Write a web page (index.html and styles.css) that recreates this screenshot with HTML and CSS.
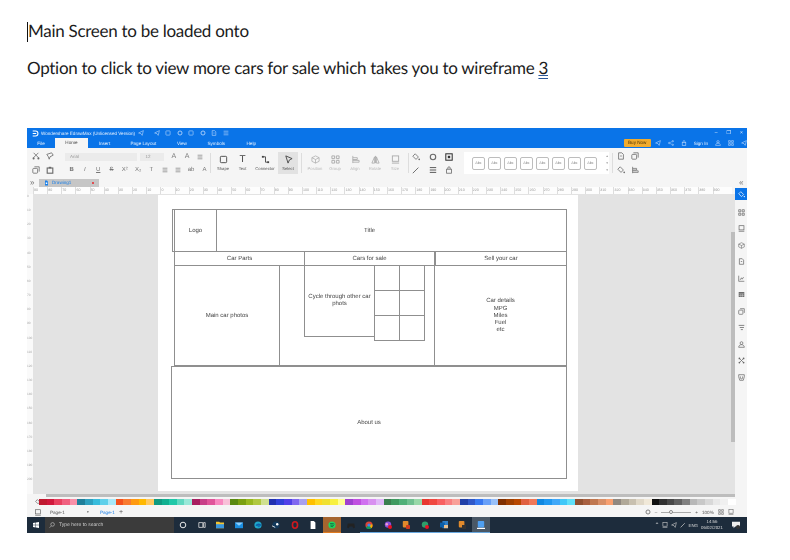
FILE: index.html
```html
<!DOCTYPE html>
<html lang="en">
<head>
    <meta charset="UTF-8">
    <meta name="viewport" content="width=device-width, initial-scale=1.0">
    <title>Main Screen</title>
    <link rel="stylesheet" href="styles.css">
</head>
<body>
    <svg class="defs" width="0" height="0">
        <symbol id="i-box" viewBox="0 0 10 10"><rect x="1.5" y="1.5" width="7" height="7" rx="1" fill="none" stroke="currentColor"/></symbol>
        <symbol id="i-doc" viewBox="0 0 10 10"><path d="M2 1h4l2 2v6H2z M4 5h2" fill="none" stroke="currentColor"/></symbol>
        <symbol id="i-cut" viewBox="0 0 10 10"><path d="M2 1l6 6M8 1L2 7" fill="none" stroke="currentColor"/><circle cx="2" cy="8" r="1.3" fill="currentColor"/><circle cx="8" cy="8" r="1.3" fill="currentColor"/></symbol>
        <symbol id="i-brush" viewBox="0 0 10 10"><path d="M1 3l6-2 2 3-4 2-1 3-1-3z" fill="none" stroke="currentColor"/></symbol>
        <symbol id="i-paste" viewBox="0 0 10 10"><rect x="1.5" y="2.5" width="7" height="6.5" fill="none" stroke="currentColor" stroke-width="1.4"/><rect x="3.5" y="1" width="3" height="2" fill="currentColor"/></symbol>
        <symbol id="i-copy" viewBox="0 0 10 10"><rect x="1" y="3" width="6" height="6" rx="1" fill="none" stroke="currentColor"/><path d="M3 1h6v6" fill="none" stroke="currentColor"/></symbol>
        <symbol id="i-lines" viewBox="0 0 10 10"><path d="M1 2h8M1 5h8M1 8h8" fill="none" stroke="currentColor"/></symbol>
        <symbol id="i-grid" viewBox="0 0 10 10"><path d="M1 1h3v3H1zM6 1h3v3H6zM1 6h3v3H1zM6 6h3v3H6z" fill="none" stroke="currentColor"/></symbol>
        <symbol id="i-hex" viewBox="0 0 10 10"><path d="M5 1l4 2v4L5 9 1 7V3z M1 3l4 2 4-2M5 5v4" fill="none" stroke="currentColor" stroke-width=".8"/></symbol>
        <symbol id="i-align" viewBox="0 0 10 10"><path d="M2 1v8M2 3h5v2H2M2 6h7v2H2" fill="none" stroke="currentColor" stroke-width=".9"/></symbol>
        <symbol id="i-flip" viewBox="0 0 10 10"><path d="M5 1v8M4 2L1 9h3zM6 2l3 7H6z" fill="none" stroke="currentColor" stroke-width=".9"/></symbol>
        <symbol id="i-size" viewBox="0 0 10 10"><rect x="1.5" y="1" width="7" height="6" fill="none" stroke="currentColor"/><path d="M1 9h8" stroke="currentColor"/></symbol>
        <symbol id="i-fill" viewBox="0 0 10 10"><path d="M4 1l4 4-3 3-4-4z" fill="none" stroke="currentColor"/><circle cx="9" cy="8" r="1" fill="currentColor"/></symbol>
        <symbol id="i-ring" viewBox="0 0 10 10"><circle cx="5" cy="5" r="3.4" fill="none" stroke="currentColor" stroke-width="1.4"/></symbol>
        <symbol id="i-shadow" viewBox="0 0 10 10"><rect x="1" y="1" width="8" height="8" fill="none" stroke="currentColor" stroke-width="1.3"/><rect x="3.5" y="3.5" width="3" height="3" fill="currentColor"/></symbol>
        <symbol id="i-pen" viewBox="0 0 10 10"><path d="M1 9l7-7" fill="none" stroke="currentColor" stroke-width="1.2"/></symbol>
        <symbol id="i-lock" viewBox="0 0 10 10"><rect x="2" y="4" width="6" height="5" fill="none" stroke="currentColor"/><path d="M3.5 4V2.500a1.500 1.500 0 013 0V4" fill="none" stroke="currentColor"/></symbol>
        <symbol id="i-select" viewBox="0 0 10 10"><path d="M2 1l7 3-3 1.500L4.500 9z" fill="none" stroke="currentColor"/></symbol>
        <symbol id="i-conn" viewBox="0 0 10 10"><path d="M2 2h3v6h3" fill="none" stroke="currentColor"/><rect x="1" y="1" width="2" height="2" fill="currentColor"/><rect x="7" y="7" width="2" height="2" fill="currentColor"/></symbol>
        <symbol id="i-share" viewBox="0 0 10 10"><circle cx="2" cy="5" r="1.2" fill="none" stroke="currentColor"/><circle cx="8" cy="2" r="1.200" fill="none" stroke="currentColor"/><circle cx="8" cy="8" r="1.200" fill="none" stroke="currentColor"/><path d="M3 4.500l4-2M3 5.500l4 2" stroke="currentColor" stroke-width=".7"/></symbol>
        <symbol id="i-send" viewBox="0 0 10 10"><path d="M1 5l8-4-2 8-2-3z" fill="none" stroke="currentColor"/></symbol>
        <symbol id="i-chart" viewBox="0 0 10 10"><path d="M1 1v8h8M3 7l2-3 1 2 2-3" fill="none" stroke="currentColor"/></symbol>
        <symbol id="i-table" viewBox="0 0 10 10"><rect x="1" y="1.500" width="8" height="7" fill="currentColor"/><path d="M1 4h8M1 6.300h8M4 4v4.500M6.500 4v4.500" stroke="#f5f5f5" stroke-width=".5"/></symbol>
        <symbol id="i-filter" viewBox="0 0 10 10"><path d="M1 2h8M2.500 5h6M4 8h3" stroke="currentColor" stroke-width="1.100"/></symbol>
        <symbol id="i-user" viewBox="0 0 10 10"><circle cx="5" cy="3" r="2" fill="none" stroke="currentColor"/><path d="M1 9c0-5 8-5 8 0z" fill="none" stroke="currentColor"/></symbol>
        <symbol id="i-cross" viewBox="0 0 10 10"><path d="M2 2l6 6M8 2L2 8" stroke="currentColor"/><circle cx="2" cy="2" r="1.200" fill="currentColor"/><circle cx="8" cy="2" r="1.200" fill="currentColor"/><circle cx="2" cy="8" r="1.200" fill="currentColor"/><circle cx="8" cy="8" r="1.200" fill="currentColor"/></symbol>
        <symbol id="i-basket" viewBox="0 0 10 10"><path d="M1 1h8v3L7.500 9h-5L1 4zM3.500 3.500v2a1.500 1.500 0 003 0v-2" fill="none" stroke="currentColor"/></symbol>
    </svg>

    <p class="line first"><span class="caret"></span>Main Screen to be loaded onto</p>
    <p class="line">Option to click to view more cars for sale which takes you to wireframe <span class="link">3</span></p>

    <div class="app">
        <div class="titlebar">
            <div class="title-top">
                <svg class="logo" viewBox="0 0 10 10"><path d="M1 1.500h4a3.500 3.500 0 010 7H1M1 5h5" fill="none" stroke="#fff" stroke-width="1.500"/></svg>
                <span class="app-name">Wondershare EdrawMax (Unlicensed Version)</span>
                <span class="quick">
                    <svg><use href="#i-send"/></svg><svg><use href="#i-send"/></svg><svg><use href="#i-box"/></svg><svg><use href="#i-ring"/></svg><svg><use href="#i-box"/></svg><svg><use href="#i-ring"/></svg><svg><use href="#i-doc"/></svg><svg><use href="#i-lines"/></svg>
                </span>
                <span class="winctl"><i>&#8211;</i><i>&#10064;</i><i>&#215;</i></span>
            </div>
            <div class="title-tabs">
                <span class="tab t-file">File</span>
                <span class="tab t-home">Home</span>
                <span class="tab t-insert">Insert</span>
                <span class="tab t-layout">Page Layout</span>
                <span class="tab t-view">View</span>
                <span class="tab t-symbols">Symbols</span>
                <span class="tab t-help">Help</span>
                <span class="buy">Buy Now</span>
                <span class="account">
                    <svg><use href="#i-send"/></svg><svg><use href="#i-share"/></svg><svg><use href="#i-lock"/></svg><b>Sign In</b><svg><use href="#i-user"/></svg><svg><use href="#i-grid"/></svg><svg><use href="#i-send"/></svg>
                </span>
            </div>
        </div>

        <div class="ribbon">
            <div class="rb-clip">
                <svg><use href="#i-cut"/></svg><svg><use href="#i-brush"/></svg>
                <svg><use href="#i-copy"/></svg><svg><use href="#i-paste"/></svg>
            </div>
            <div class="rb-font">
                <div class="font-row">
                    <span class="select font-name">Arial</span>
                    <span class="select font-size">12</span>
                    <span class="fmt big">A</span><span class="fmt big">A</span><svg class="fmt-ico"><use href="#i-lines"/></svg>
                </div>
                <div class="font-row">
                    <span class="fmt"><b>B</b></span><span class="fmt"><em>I</em></span><span class="fmt"><u>U</u></span><span class="fmt"><s>S</s></span><span class="fmt">X²</span><span class="fmt">X₂</span><span class="fmt">T</span><svg class="fmt-ico"><use href="#i-lines"/></svg><svg class="fmt-ico"><use href="#i-lines"/></svg><span class="fmt">ab</span><span class="fmt">A</span>
                </div>
            </div>
            <div class="rb-sep"></div>
            <div class="tool w-shape"><svg><use href="#i-box"/></svg><span>Shape</span></div>
            <div class="tool w-text"><strong class="big-t">T</strong><span>Text</span></div>
            <div class="tool w-conn"><svg><use href="#i-conn"/></svg><span>Connector</span></div>
            <div class="tool w-select active"><svg><use href="#i-select"/></svg><span>Select</span></div>
            <div class="rb-sep"></div>
            <div class="tool off"><svg><use href="#i-hex"/></svg><span>Position</span></div>
            <div class="tool off"><svg><use href="#i-grid"/></svg><span>Group</span></div>
            <div class="tool off"><svg><use href="#i-align"/></svg><span>Align</span></div>
            <div class="tool off"><svg><use href="#i-flip"/></svg><span>Rotate</span></div>
            <div class="tool off"><svg><use href="#i-size"/></svg><span>Size</span></div>
            <div class="rb-sep"></div>
            <div class="rb-style">
                <svg><use href="#i-fill"/></svg><svg><use href="#i-ring"/></svg><svg class="dark"><use href="#i-shadow"/></svg>
                <svg><use href="#i-pen"/></svg><svg class="dark"><use href="#i-lines"/></svg><svg><use href="#i-lock"/></svg>
            </div>
            <div class="abc-box">
                <span class="abc">Abc</span><span class="abc">Abc</span><span class="abc">Abc</span><span class="abc">Abc</span><span class="abc">Abc</span><span class="abc">Abc</span><span class="abc">Abc</span><span class="abc">Abc</span>
                <span class="abc-more">&#9652;<br>&#9662;<br>&#9662;</span>
            </div>
            <div class="rb-sep"></div>
            <div class="rb-last">
                <svg><use href="#i-doc"/></svg><svg><use href="#i-copy"/></svg>
                <svg><use href="#i-fill"/></svg><svg><use href="#i-align"/></svg>
            </div>
        </div>

        <div class="docbar">
            <span class="chev">&#187;</span>
            <div class="doctab">
                <svg class="doc-ico" viewBox="0 0 10 10"><path d="M2 0h4l2 2v8H2z" fill="#1a7fe8"/><rect x="3.500" y="4" width="3" height="3" fill="#fff"/></svg>
                <span class="doc-name">Drawing1</span>
                <span class="doc-dot"></span>
            </div>
            <span class="chev end">&#171;</span>
        </div>
        <div class="ruler-row">
            <div class="ruler" id="ruler"></div>
        </div>

        <div class="work">
            <div class="vruler" id="vruler"></div>
            <div class="canvas">
                <div class="page">
                    <div class="shape header">Title</div>
                    <div class="shape logo-box">Logo</div>
                    <div class="shape nav n1">Car Parts</div>
                    <div class="shape nav n2">Cars for sale</div>
                    <div class="shape nav n3">Sell your car</div>
                    <div class="shape col main-photo">Main car photos</div>
                    <div class="shape col mid"></div>
                    <div class="shape col details">Car details<br>MPG<br>Miles<br>Fuel<br>etc</div>
                    <div class="shape cycle">Cycle through other car<br>phots</div>
                    <div class="thumbs"><i></i><i></i><i></i><i></i><i></i><i></i></div>
                    <div class="shape about">About us</div>
                </div>
                <div class="vscroll"></div>
            </div>
            <div class="sidepanel">
                <div class="side-on"><svg><use href="#i-fill"/></svg></div>
                <svg><use href="#i-grid"/></svg>
                <svg><use href="#i-size"/></svg>
                <svg><use href="#i-hex"/></svg>
                <svg><use href="#i-doc"/></svg>
                <svg><use href="#i-chart"/></svg>
                <svg><use href="#i-table"/></svg>
                <svg><use href="#i-copy"/></svg>
                <svg><use href="#i-filter"/></svg>
                <svg><use href="#i-user"/></svg>
                <svg><use href="#i-cross"/></svg>
                <svg><use href="#i-basket"/></svg>
            </div>
        </div>
        <div class="hscroll"></div>

        <div class="palette">
            <svg class="pal-ico"><use href="#i-fill"/></svg>
            <div class="swatches" id="swatches"></div>
        </div>

        <div class="pagebar">
            <svg class="pb-ico"><use href="#i-size"/></svg>
            <span class="pb-name">Page-1</span>
            <span class="pb-caret">&#9662;</span>
            <span class="pb-active">Page-1</span>
            <span class="pb-plus">+</span>
            <span class="zoom">
                <svg><use href="#i-ring"/></svg>
                <span>&#8211;</span><span class="slider"><i></i></span><span>+</span>
                <span class="zoom-val">100%</span>
                <svg><use href="#i-grid"/></svg><svg><use href="#i-size"/></svg>
            </span>
        </div>

        <div class="taskbar">
            <svg class="start" viewBox="0 0 10 10"><path d="M0 1.500l4.300-.6v3.800H0zM5 .8L10 0v4.700H5zM0 5.300h4.300v3.800L0 8.500zM5 5.300h5V10l-5-.8z" fill="#fff"/></svg>
            <div class="search">
                <svg viewBox="0 0 10 10"><circle cx="6" cy="4" r="3" fill="none" stroke="#ccc"/><path d="M4 6.500L1 9.500" stroke="#ccc"/></svg>
                <span>Type here to search</span>
            </div>
            <div class="tray-apps">
                <span class="app-i"><svg viewBox="0 0 10 10"><circle cx="5" cy="5" r="3.500" fill="none" stroke="#eee" stroke-width="1.200"/></svg></span>
                <span class="app-i"><svg viewBox="0 0 10 10"><path d="M1 2h5v6H1zM7 2h2v6H7z" fill="none" stroke="#ddd"/></svg></span>
                <span class="app-i"><svg viewBox="0 0 10 10"><path d="M0 1h4l1 1h5v7H0z" fill="#f4c430"/><rect y="4" width="10" height="5" fill="#3a96dd"/></svg></span>
                <span class="app-i"><svg viewBox="0 0 10 10"><rect y="2" width="10" height="7" fill="#1b8ee0"/><path d="M0 2l5 4 5-4" fill="#8cd0ff"/></svg></span>
                <span class="app-i"><svg viewBox="0 0 10 10"><circle cx="5" cy="5" r="4.500" fill="#1fa6c9"/><path d="M2 6c1-4 7-4 7 0H4c0 2 3 2 4 1" fill="#0b5ea8"/></svg></span>
                <span class="app-i"><svg viewBox="0 0 10 10"><circle cx="5" cy="5" r="4.500" fill="#12395b"/><circle cx="6.500" cy="4" r="1.500" fill="#fff"/><path d="M0 6l4 2" stroke="#fff"/></svg></span>
                <span class="app-i"><svg viewBox="0 0 10 10"><ellipse cx="5" cy="5" rx="3.200" ry="4" fill="none" stroke="#d0191f" stroke-width="2"/></svg></span>
                <span class="app-i"><svg viewBox="0 0 10 10"><path d="M2 0h4l2 2v8H2z" fill="#fff"/></svg></span>
                <span class="app-i playing"><svg viewBox="0 0 10 10"><circle cx="5" cy="5" r="4.500" fill="#1ed760"/><path d="M2.500 3.500c2-.6 4-.4 5.500.5M3 5.300c1.500-.4 3-.3 4.300.4M3.300 7c1-.3 2.200-.2 3.200.3" stroke="#123" stroke-width=".7" fill="none"/></svg></span>
                <span class="app-i"><svg viewBox="0 0 10 10"><path d="M1 3h8l1 5-2 1-1-2H3L2 9 0 8z" fill="#222"/></svg></span>
                <span class="app-i open"><svg viewBox="0 0 10 10"><circle cx="5" cy="5" r="4.500" fill="#db4437"/><path d="M5 5L1 8a4.500 4.500 0 007 1z" fill="#0f9d58"/><path d="M5 5l4-1a4.500 4.500 0 01-1 5z" fill="#f4b400"/><circle cx="5" cy="5" r="2" fill="#4285f4"/></svg></span>
                <span class="app-i open"><svg viewBox="0 0 10 10"><circle cx="5" cy="4.500" r="4" fill="#8a4fd8"/><circle cx="3.500" cy="4" r="1.500" fill="#f0a0d0"/><circle cx="7.500" cy="7.500" r="2.500" fill="#e81123"/></svg></span>
                <span class="app-i open"><svg viewBox="0 0 10 10"><rect x="1" y="0" width="7" height="8" rx="1" fill="#e08a2c"/><rect x="5" y="5" width="5" height="5" rx="1" fill="#d0391f"/></svg></span>
                <span class="app-i open"><svg viewBox="0 0 10 10"><circle cx="5" cy="4.500" r="4" fill="#2e9e6a"/><circle cx="7.500" cy="7.500" r="2.500" fill="#e81123"/></svg></span>
                <span class="app-i open"><svg viewBox="0 0 10 10"><rect x="3" y="0" width="7" height="9" fill="#2e7fc9"/><rect x="0" y="2" width="6" height="6" fill="#0b5ea8"/><rect x="5" y="5" width="5" height="4" fill="#e8c090"/></svg></span>
                <span class="app-i open"><svg viewBox="0 0 10 10"><rect x="1" y="0" width="7" height="8" rx="1" fill="#e08a2c"/><rect x="5" y="5" width="5" height="5" fill="#333"/></svg></span>
                <span class="app-i open current"><svg viewBox="0 0 10 10"><rect x="1" y="0" width="8" height="8" rx="1" fill="#4f9ff0"/><path d="M0 8.500h10v1.500H0z" fill="#fff"/></svg></span>
            </div>
            <div class="tray">
                <span class="tray-i">&#8963;</span>
                <svg><use href="#i-size"/></svg><svg><use href="#i-send"/></svg><svg><use href="#i-pen"/></svg>
                <span class="lang">ENG</span>
                <span class="clock">14:56<br>06/02/2021</span>
                <svg class="notify" viewBox="0 0 10 10"><path d="M0 1h10v6H4L2 9V7H0z" fill="#eee"/><circle cx="7.500" cy="7.500" r="2.500" fill="#333"/></svg>
            </div>
        </div>
    </div>

    <script>
        var colours = [
            "#c01a30","#d0183c","#e8405f","#f0607f","#f890a8",
            "#1f7f9a","#2ea0bf","#38bcdc","#60d0ea","#a8e8f8",
            "#f4511e","#f97a30","#ff9a10","#ffb800","#ffc860",
            "#0f9a80","#10b090","#20c8a8","#60d8c0","#98e8d8",
            "#a81f60","#c83f88","#e0559a","#f888c0","#f8c0d8",
            "#5a8a10","#7aa010","#98b820","#b0c840","#d0e090",
            "#2030b0","#3040d8","#5040e8","#8068f0","#a8a0f0",
            "#ffc000","#ffd820","#f0e030","#f8f040","#ffff90",
            "#a040d0","#c050e0","#d070f0","#d890f0","#e0b8f8",
            "#3a8050","#3f9a60","#50b078","#70c090","#98d8a8",
            "#e83830","#f04840","#f86060","#f88080","#f8a098",
            "#2040a8","#3058c8","#3878f0","#68a0f8","#98c0f8",
            "#803000","#a04000","#b84800","#e06040","#f07858",
            "#1088e0","#2098f0","#40a8f8","#40c8f8","#60e0f8",
            "#905030","#a86040","#c07850","#d89068","#f8a070",
            "#908880","#b0a898","#c8c0b0","#e0d8c8","#f0e8d8",
            "#101010","#303030","#484848","#606060","#808080",
            "#b8b8b8","#c8c8c8","#d8d8d8","#e8e8e8","#f0f0f0","#ffffff"
        ];
        document.getElementById("swatches").innerHTML = colours.map(function(c){
            return `<i style="background:${c}"></i>`;
        }).join("");

        var marks = "";
        for (var n = -90; n <= 390; n += 10) {
            marks += `<span>${Math.abs(n)}</span>`;
        }
        document.getElementById("ruler").innerHTML = marks;

        var side = "";
        for (var m = 0; m < 21; m++) {
            side += `<span>${m * 10}</span>`;
        }
        document.getElementById("vruler").innerHTML = side;
    </script>
</body>
</html>
```

FILE: styles.css
```css
*{
    box-sizing: border-box;
}
body{
    margin: 0;
    height: 560px;
    overflow: hidden;
    background: #fff;
    font-family: "Liberation Sans", Arial, sans-serif;
    text-rendering: geometricPrecision;
}
.defs{
    display: block;
    height: 0;
}
svg{
    width: 7px;
    height: 7px;
    flex: none;
    color: #6a6a6a;
}

/* the word document text */
.line{
    margin: 0;
    padding-left: 27px;
    height: 24px;
    line-height: 24px;
    font-family: Lato, "Open Sans", sans-serif;
    font-size: 17px;
    letter-spacing: -0.28px;
    color: #1c1c1c;
}
.first{
    margin-top: 19px;
    margin-bottom: 13px;
}
.caret{
    display: inline-block;
    width: 1px;
    height: 20px;
    background: #111;
    vertical-align: -5px;
}
.link{
    text-decoration: underline double #2b579a;
}

/* app window */
.app{
    width: 720px;
    height: 405px;
    margin: 48px 0 0 27px;
    display: flex;
    flex-direction: column;
    background: #f5f5f5;
    filter: blur(.3px);
}
.titlebar{
    height: 20px;
    background: #0a74e8;
    color: #e8f2ff;
    font-size: 4.6px;
}
.title-top{
    height: 10px;
    display: flex;
    align-items: center;
    padding-left: 5px;
}
.logo{
    width: 7px;
    height: 7px;
}
.app-name{
    margin-left: 2px;
    width: 97px;
    white-space: nowrap;
}
.quick{
    display: flex;
    gap: 5.5px;
}
.quick svg:first-child{
    margin-right: 4px;
}
.quick svg,
.account svg{
    color: #bcd8fb;
    width: 6px;
    height: 6px;
}
.winctl{
    margin-left: auto;
    display: flex;
    gap: 9px;
    padding-right: 4px;
    font-size: 5px;
}
.winctl i{
    font-style: normal;
}
.title-tabs{
    height: 10px;
    display: flex;
    align-items: center;
}
.tab{
    text-align: center;
    white-space: nowrap;
}
.t-file{ width: 28px; }
.t-home{
    width: 33px;
    height: 10px;
    line-height: 10px;
    background: #f5f5f5;
    color: #444;
}
.t-insert{ width: 33px; }
.t-layout{ width: 45px; }
.t-view{ width: 32px; }
.t-symbols{ width: 37px; }
.t-help{ width: 33px; }
.buy{
    margin-left: 356px;
    width: 27px;
    height: 8px;
    line-height: 8px;
    text-align: center;
    background: #f0ab2e;
    color: #4a3000;
    border-radius: 1px;
}
.account{
    margin-left: 4px;
    display: flex;
    align-items: center;
    gap: 7px;
    white-space: nowrap;
}
.account b{
    font-weight: normal;
}

/* ribbon */
.ribbon{
    height: 30px;
    display: flex;
    align-items: center;
    padding-left: 5px;
    background: #f5f5f5;
}
.rb-clip{
    width: 31px;
    display: grid;
    grid-template-columns: 14px 14px;
    row-gap: 6px;
}
.rb-clip svg{
    width: 8px;
    height: 8px;
}
.rb-font{
    width: 142px;
    display: flex;
    flex-direction: column;
    gap: 4px;
    margin-left: 2px;
}
.font-row{
    height: 9px;
    display: flex;
    align-items: center;
    color: #777;
    font-size: 6px;
}
.select{
    height: 8px;
    line-height: 8px;
    background: #ebebeb;
    font-size: 4.5px;
    color: #999;
    padding-left: 5px;
}
.font-name{ width: 73px; margin-right: 3px; }
.font-size{ width: 24px; margin-right: 3px; }
.fmt{
    width: 13.3px;
    text-align: center;
    flex: none;
}
.big{
    font-size: 7px;
}
.fmt-ico{
    width: 6px;
    height: 6px;
    margin: 0 3.6px;
}
.rb-sep{
    width: 1px;
    height: 20px;
    background: #ddd;
    margin: 0 3px;
    flex: none;
}
.tool{
    width: 20px;
    height: 22px;
    display: flex;
    flex-direction: column;
    align-items: center;
    justify-content: center;
    gap: 2px;
    font-size: 4.2px;
    color: #555;
    white-space: nowrap;
    flex: none;
}
.tool svg{
    width: 9px;
    height: 9px;
    color: #444;
}
.w-shape{ width: 20px; margin-left: -1px; }
.w-text{ width: 19px; }
.w-conn{ width: 26px; }
.active{
    background: #e2e2e2;
}
.big-t{
    font-size: 10px;
    line-height: 9px;
    color: #444;
    font-weight: normal;
}
.off{
    color: #bbb;
}
.off svg{
    color: #aaa;
}
.rb-style{
    width: 52px;
    display: grid;
    grid-template-columns: repeat(3, 16.5px);
    row-gap: 5px;
}
.rb-style svg{
    width: 8px;
    height: 8px;
}
.rb-style .dark{
    color: #333;
}
.abc-box{
    width: 145px;
    height: 22px;
    display: flex;
    align-items: center;
    gap: 3px;
    padding-left: 8px;
    background: #fff;
    flex: none;
}
.abc{
    width: 13px;
    height: 13px;
    border: 1px solid #bdbdbd;
    border-radius: 2px;
    font-size: 3.8px;
    line-height: 11px;
    text-align: center;
    color: #888;
    flex: none;
}
.abc-more{
    margin-left: auto;
    margin-right: 1px;
    font-size: 3.5px;
    line-height: 7px;
    color: #999;
}
.rb-last{
    display: grid;
    grid-template-columns: 14px 14px;
    row-gap: 6px;
    padding-left: 1px;
}
.rb-last svg{
    width: 8px;
    height: 8px;
}

/* document tab + rulers */
.docbar{
    height: 9px;
    display: flex;
    align-items: center;
    padding-left: 3px;
    background: #f5f5f5;
}
.chev{
    width: 9px;
    color: #777;
    font-size: 8px;
    line-height: 9px;
}
.chev.end{
    margin-left: auto;
    width: 8px;
}
.doctab{
    width: 60px;
    height: 8px;
    display: flex;
    align-items: center;
    padding-left: 5px;
    background: #c6c6c6;
    font-size: 4.6px;
}
.doc-ico{
    width: 5px;
    height: 6px;
}
.doc-name{
    margin-left: 3px;
    color: #1a7fe8;
}
.doc-dot{
    width: 2px;
    height: 2px;
    margin-left: auto;
    margin-right: 5px;
    border-radius: 50%;
    background: #e8262c;
}
.ruler-row{
    height: 7px;
    padding: 0 15px 0 6px;
    background: #f5f5f5;
}
.ruler{
    height: 7px;
    display: flex;
    overflow: hidden;
    background: #fdfdfd;
}
.ruler span{
    width: 14.17px;
    flex: none;
    font-size: 3.6px;
    line-height: 6px;
    color: #999;
    border-left: 1px solid #ddd;
}

/* work area */
.work{
    height: 300px;
    display: flex;
}
.vruler{
    width: 6px;
    flex: none;
    overflow: hidden;
    background: #fafafa;
}
.vruler span{
    display: block;
    height: 14.17px;
    font-size: 3.2px;
    color: #aaa;
    overflow: hidden;
}
.canvas{
    width: 702px;
    flex: none;
    position: relative;
    padding: 1px 0 0 125px;
    background: #e3e3e3;
    overflow: hidden;
}
.vscroll{
    position: absolute;
    right: 0;
    top: 38px;
    width: 4px;
    height: 210px;
    background: #bdbdbd;
}
.page{
    position: relative;
    width: 420px;
    height: 296px;
    background: #fff;
}

/* the wireframe on the sheet */
.shape{
    position: absolute;
    display: flex;
    align-items: center;
    justify-content: center;
    text-align: center;
    padding-top: 2px;
    border: 1px solid #8f8f8f;
    font-size: 6px;
    line-height: 7.2px;
    color: #444;
}
.header{ left: 14px; top: 14px; width: 395px; height: 43px; }
.logo-box{ left: 16px; top: 14px; width: 43px; height: 43px; }
.nav{ top: 56px; height: 15px; }
.n1{ left: 16px; width: 131px; }
.n2{ left: 146px; width: 131px; }
.n3{ left: 277px; width: 132px; }
.col{ top: 70px; height: 101px; }
.main-photo{ left: 16px; width: 106px; }
.mid{ left: 121px; width: 156px; }
.details{ left: 276px; width: 133px; }
.cycle{
    left: 146px;
    top: 70px;
    width: 71px;
    height: 72px;
    align-items: flex-start;
    padding-top: 28px;
}
.thumbs{
    position: absolute;
    left: 216px;
    top: 70px;
    display: grid;
    grid-template-columns: 25px 25px;
    grid-auto-rows: 25px;
    width: 51px;
    border-right: 1px solid #8f8f8f;
    border-bottom: 1px solid #8f8f8f;
}
.thumbs i{
    border-left: 1px solid #8f8f8f;
    border-top: 1px solid #8f8f8f;
}
.about{ left: 13px; top: 171px; width: 396px; height: 113px; }

.sidepanel{
    width: 12px;
    margin-top: -6px;
    flex: none;
    display: flex;
    flex-direction: column;
    align-items: center;
    gap: 9.5px;
    background: #f5f5f5;
}
.sidepanel svg{
    width: 7px;
    height: 7px;
    color: #666;
}
.side-on{
    width: 12px;
    height: 12px;
    margin-bottom: -1px;
    display: flex;
    align-items: center;
    justify-content: center;
    background: #0a74e8;
}
.side-on svg{
    color: #fff;
}
.hscroll{
    height: 3px;
    margin: 0 12px 0 19px;
    background: #bdbdbd;
}

/* bottom bars */
.palette{
    height: 10px;
    display: flex;
    align-items: center;
    padding-left: 8px;
    background: #f5f5f5;
}
.pal-ico{
    width: 6px;
    height: 6px;
    color: #555;
}
.swatches{
    height: 6px;
    display: flex;
    margin-left: -2px;
}
.swatches i{
    width: 7.67px;
    height: 6px;
    flex: none;
}
.pagebar{
    height: 10px;
    display: flex;
    align-items: center;
    padding-left: 7px;
    font-size: 4.6px;
    color: #555;
    background: #f5f5f5;
}
.pb-ico{
    width: 8px;
    height: 7px;
}
.pb-name{
    margin-left: 8px;
    width: 37px;
}
.pb-caret{
    width: 13px;
    font-size: 3.5px;
}
.pb-active{
    width: 19px;
    color: #1a7fe8;
}
.pb-plus{
    font-size: 7px;
}
.zoom{
    margin-left: auto;
    display: flex;
    align-items: center;
    gap: 4px;
    padding-right: 13px;
}
.zoom svg{
    width: 6px;
    height: 6px;
}
.slider{
    position: relative;
    width: 30px;
    height: 1px;
    background: #aaa;
}
.slider i{
    position: absolute;
    left: 8px;
    top: -2px;
    width: 4px;
    height: 4px;
    border: 1px solid #888;
    border-radius: 50%;
    background: #fff;
}
.zoom-val{
    width: 12px;
    white-space: nowrap;
}

.taskbar{
    height: 16px;
    display: flex;
    align-items: center;
    background: #1d2c3c;
    color: #ddd;
}
.start{
    width: 6px;
    height: 6px;
    margin: 0 6px;
}
.search{
    width: 129px;
    height: 16px;
    display: flex;
    align-items: center;
    gap: 4px;
    padding-left: 4px;
    background: #3b3b3b;
    font-size: 5px;
    color: #ccc;
}
.search svg{
    width: 6px;
    height: 6px;
}
.tray-apps{
    display: flex;
}
.app-i{
    width: 18.6px;
    height: 16px;
    flex: none;
    display: flex;
    align-items: center;
    justify-content: center;
}
.app-i svg{
    width: 8px;
    height: 8px;
}
.playing{
    background: #a5652f;
    border-bottom: 1px solid #e07b20;
}
.open{
    border-bottom: 1px solid #6aa9e0;
}
.current{
    background: #4a5866;
}
.tray{
    flex: 1;
    display: flex;
    align-items: center;
    justify-content: flex-end;
    gap: 3px;
    padding-right: 7px;
    font-size: 4.4px;
}
.tray svg{
    width: 6px;
    height: 6px;
    color: #ccc;
}
.tray-i{
    font-size: 6px;
}
.lang{
    margin-left: -1px;
}
.clock{
    width: 28px;
    margin-left: -3px;
    text-align: center;
    line-height: 6px;
}
.tray .notify{
    width: 8px;
    height: 8px;
    margin-left: 3px;
}
```
